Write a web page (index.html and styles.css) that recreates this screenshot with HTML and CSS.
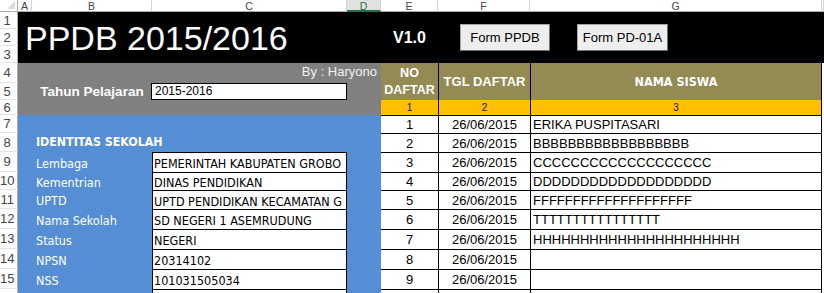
FILE: index.html
```html
<!DOCTYPE html>
<html lang="id">

<head>
    <meta charset="UTF-8">
    <meta name="viewport" content="width=device-width, initial-scale=1.0">
    <title>PPDB 2015/2016</title>
    <link rel="stylesheet" href="styles.css">
</head>

<body>
    <div class="sheet">
        <!-- column headers -->
        <div class="corner"><span class="corner-mark"></span></div>
        <div class="colhead">A</div>
        <div class="colhead">B</div>
        <div class="colhead">C</div>
        <div class="colhead active">D</div>
        <div class="colhead">E</div>
        <div class="colhead">F</div>
        <div class="colhead">G</div>
        <div class="colhead"></div>

        <!-- row numbers -->
        <div class="rownums">
            <div>1</div>
            <div>2</div>
            <div>3</div>
            <div>4</div>
            <div>5</div>
            <div>6</div>
            <div>7</div>
            <div>8</div>
            <div>9</div>
            <div>10</div>
            <div>11</div>
            <div>12</div>
            <div>13</div>
            <div>14</div>
            <div>15</div>
            <div></div>
        </div>

        <div class="banner">
            <h1 class="title">PPDB 2015/2016</h1>
            <div class="version">V1.0</div>
            <div class="actions">
                <button class="btn">Form PPDB</button>
                <button class="btn">Form PD-01A</button>
            </div>
        </div>

        <div class="intro">
            <div class="byline">By : Haryono</div>
            <div class="year-label">Tahun Pelajaran</div>
            <div class="year-box">2015-2016</div>
        </div>

        <div class="ident">
            <div class="spacer"></div>
            <div class="ident-title">IDENTITAS SEKOLAH</div>
            <div class="label">Lembaga</div>
            <div class="value">PEMERINTAH KABUPATEN GROBO</div>
            <div class="label">Kementrian</div>
            <div class="value">DINAS PENDIDIKAN</div>
            <div class="label">UPTD</div>
            <div class="value">UPTD PENDIDIKAN KECAMATAN G</div>
            <div class="label">Nama Sekolah</div>
            <div class="value">SD NEGERI 1 ASEMRUDUNG</div>
            <div class="label">Status</div>
            <div class="value">NEGERI</div>
            <div class="label">NPSN</div>
            <div class="value">20314102</div>
            <div class="label">NSS</div>
            <div class="value">101031505034</div>
            <div class="label"></div>
            <div class="value"></div>
        </div>

        <div class="roster">
            <div class="head">NO<br>DAFTAR</div>
            <div class="head">TGL DAFTAR</div>
            <div class="head head-name">NAMA SISWA</div>

            <div class="idx">1</div>
            <div class="idx">2</div>
            <div class="idx">3</div>

            <div class="cell">1</div>
            <div class="cell">26/06/2015</div>
            <div class="cell name">ERIKA PUSPITASARI</div>
            <div class="cell">2</div>
            <div class="cell">26/06/2015</div>
            <div class="cell name">BBBBBBBBBBBBBBBBBB</div>
            <div class="cell">3</div>
            <div class="cell">26/06/2015</div>
            <div class="cell name">CCCCCCCCCCCCCCCCCCC</div>
            <div class="cell">4</div>
            <div class="cell">26/06/2015</div>
            <div class="cell name">DDDDDDDDDDDDDDDDDDD</div>
            <div class="cell">5</div>
            <div class="cell">26/06/2015</div>
            <div class="cell name">FFFFFFFFFFFFFFFFFFFF</div>
            <div class="cell">6</div>
            <div class="cell">26/06/2015</div>
            <div class="cell name">TTTTTTTTTTTTTTTT</div>
            <div class="cell">7</div>
            <div class="cell">26/06/2015</div>
            <div class="cell name">HHHHHHHHHHHHHHHHHHHHHH</div>
            <div class="cell">8</div>
            <div class="cell">26/06/2015</div>
            <div class="cell name"></div>
            <div class="cell">9</div>
            <div class="cell">26/06/2015</div>
            <div class="cell name"></div>
            <div class="cell"></div>
            <div class="cell"></div>
            <div class="cell name"></div>
        </div>

        <div class="edge"></div>
    </div>
</body>

</html>
```

FILE: styles.css
```css
* {
    box-sizing: border-box;
}

body {
    margin: 0;
    padding: 0;
    background-color: #fff;
    font-family: 'Liberation Sans', Arial, sans-serif;
    overflow: hidden;
}

.sheet {
    display: grid;
    grid-template-columns: 18px 14px 120px 195px 34px 57px 92px 292px 2px;
    grid-template-rows: 12px 17px 17px 17px 20px 17px 15px 18px 19px 20px 18px 19px 20px 20px 20px 20px 20px;
    width: 824px;
    height: 293px;
    overflow: hidden;
}

/* headers */
.corner {
    position: relative;
    background: #fff;
    border-right: 1px solid #ababab;
    border-bottom: 1px solid #ababab;
}

.corner-mark {
    position: absolute;
    right: 2px;
    bottom: 2px;
    width: 0;
    height: 0;
    border-left: 8px solid transparent;
    border-bottom: 8px solid #dadada;
}

.colhead {
    height: 12px;
    background: #fff;
    color: #444;
    font-size: 10.5px;
    line-height: 12px;
    text-align: center;
    border-right: 1px solid #d4d4d4;
    border-bottom: 1px solid #ababab;
}

.colhead.active {
    background: #e1e1e1;
    color: #217346;
    border-bottom: 2px solid #217346;
}

.rownums {
    grid-column: 1;
    grid-row: 2 / -1;
    display: grid;
    grid-template-rows: 17px 17px 17px 20px 17px 15px 18px 19px 20px 18px 19px 20px 20px 20px 20px 20px;
    border-right: 1px solid #ababab;
}

.rownums div {
    display: flex;
    align-items: center;
    justify-content: center;
    padding-right: 5px;
    color: #444;
    font-size: 13px;
    border-bottom: 1px solid #e4e4e4;
}

/* title bar */
.banner {
    grid-column: 2 / -1;
    grid-row: 2 / 5;
    display: flex;
    align-items: center;
    background: #000;
}

.title {
    width: 363px;
    margin: 0;
    padding-left: 7px;
    color: #fff;
    font-size: 34px;
    font-weight: normal;
    line-height: 1;
}

.version {
    width: 57px;
    text-align: center;
    color: #fff;
    font-size: 16px;
    font-weight: bold;
}

.actions {
    display: flex;
    gap: 27px;
    padding-left: 22px;
}

.btn {
    width: 90px;
    height: 27px;
    padding: 0;
    font-family: 'Liberation Sans', Arial, sans-serif;
    font-size: 13px;
    color: #000;
    background: #eeeeee;
    border: 1px solid #a5a5a5;
    border-right-color: #6f6f6f;
    border-bottom-color: #6f6f6f;
}

.btn + .btn {
    width: 91px;
}

/* gray block */
.intro {
    grid-column: 2 / 6;
    grid-row: 5 / 8;
    display: grid;
    grid-template-columns: 14px 120px 195px 34px;
    grid-template-rows: 20px 17px 15px;
    background: #808080;
}

.byline {
    grid-column: 1 / -1;
    padding: 1px 4px 0 0;
    text-align: right;
    color: #f2f2f2;
    font-size: 13px;
    line-height: 15px;
}

.year-label {
    grid-column: 2;
    display: flex;
    align-items: center;
    justify-content: center;
    color: #fff;
    font-size: 13.5px;
    font-weight: bold;
}

.year-box {
    grid-column: 3;
    margin-left: -1px;
    padding-left: 3px;
    background: #fff;
    border: 1px solid #000;
    font-size: 12px;
    line-height: 15px;
}

/* school identity */
.ident {
    grid-column: 2 / 6;
    grid-row: 8 / -1;
    display: grid;
    grid-template-columns: 14px 120px 195px 34px;
    grid-template-rows: 18px 19px 20px 18px 19px 20px 20px 20px 20px 20px;
    background: #558ed5;
    font-family: 'DejaVu Sans Condensed', 'DejaVu Sans', sans-serif;
}

.spacer {
    grid-column: 1 / -1;
}

.ident-title {
    grid-column: 2 / -1;
    display: flex;
    align-items: flex-end;
    padding: 0 0 2px 4px;
    color: #fff;
    font-size: 12.3px;
    font-weight: bold;
    line-height: 15px;
}

.label {
    grid-column: 2;
    display: flex;
    align-items: center;
    padding: 2px 0 0 4px;
    color: #fff;
    font-size: 12.5px;
}

.value {
    grid-column: 3;
    display: flex;
    align-items: center;
    padding: 2px 0 0 1px;
    background: #fff;
    border-top: 1px solid #000;
    border-left: 1px solid #000;
    border-right: 1px solid #000;
    color: #000;
    font-size: 12.5px;
    white-space: nowrap;
    overflow: hidden;
}

/* roster table */
.roster {
    grid-column: 6 / 9;
    grid-row: 5 / -1;
    display: grid;
    grid-template-columns: 57px 92px 292px;
    grid-template-rows: 20px 17px 15px 18px 19px 20px 18px 19px 20px 20px 20px 20px 20px;
    background: #fff;
}

.roster > :nth-child(3n+2) {
    border-left: 1px solid #000;
}

.roster > :nth-child(3n) {
    border-left: 1px solid #000;
    border-right: 1px solid #000;
}

.head {
    grid-row: span 2;
    display: flex;
    align-items: center;
    justify-content: center;
    text-align: center;
    background: #948a54;
    color: #fff;
    font-size: 13px;
    font-weight: bold;
}

.head:first-child {
    font-size: 12.5px;
    line-height: 16.5px;
}

.head-name {
    font-family: 'DejaVu Sans Condensed', 'DejaVu Sans', sans-serif;
    font-size: 12.5px;
}

.idx {
    display: flex;
    align-items: center;
    justify-content: center;
    background: #ffc000;
    color: #111;
    font-size: 10px;
}

.cell {
    display: flex;
    align-items: center;
    justify-content: center;
    border-top: 1px solid #000;
    color: #000;
    font-size: 13px;
    white-space: nowrap;
    overflow: hidden;
}

.cell.name {
    justify-content: flex-start;
    padding-left: 2px;
}

.edge {
    grid-column: 9;
    grid-row: 5 / -1;
    background: #fff;
}
```
